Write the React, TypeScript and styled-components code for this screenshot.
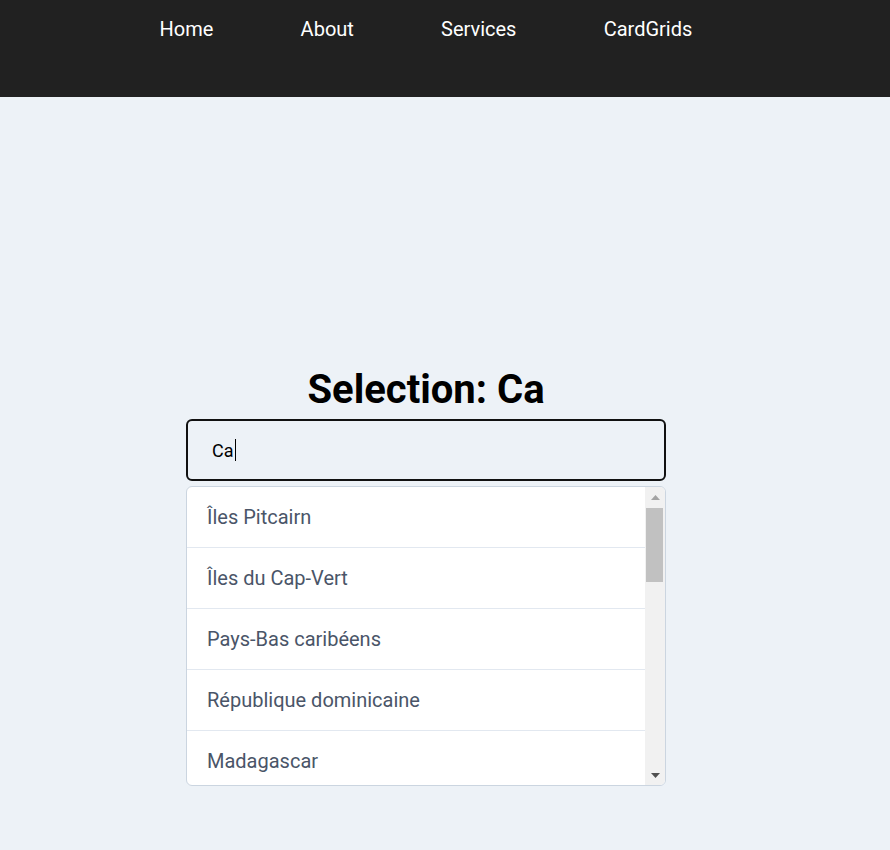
import React, { useState } from "react";
import styled, { createGlobalStyle } from "styled-components";

const Global = createGlobalStyle`
  html, body { margin: 0; padding: 0; }
  body {
    background: #edf2f7;
    font-family: Roboto, "Noto Sans", "Liberation Sans", sans-serif;
  }
  * { box-sizing: border-box; }
`;

const NavBar = styled.nav`
  background: #212121;
  height: 97px;
`;

const NavList = styled.ul`
  list-style: none;
  margin: 0;
  padding: 17px 0 0 116px;
  display: flex;
`;

const NavItem = styled.li`
  padding: 0 43.6px;
`;

const NavLink = styled.a`
  color: #ffffff;
  text-decoration: none;
  font-size: 20px;
  line-height: 24px;
`;

const Main = styled.main`
  display: flex;
  flex-direction: column;
  align-items: center;
  padding: 269px 38px 64px 0;
`;

const Title = styled.h1`
  margin: 0 0 5px;
  font-size: 40px;
  line-height: 48px;
  font-weight: 700;
  color: #000;
`;

const Field = styled.div`
  position: relative;
  width: 480px;
  height: 62px;
`;

const Input = styled.input`
  width: 100%;
  height: 100%;
  border: 2px solid #111;
  border-radius: 6px;
  background: transparent;
  padding: 0 24px;
  font-family: inherit;
  font-size: 18px;
  color: #000;
  outline: none;
  caret-color: transparent;
`;

const Caret = styled.span`
  position: absolute;
  left: 49px;
  top: 20px;
  width: 1px;
  height: 22px;
  background: #000;
  pointer-events: none;
`;

const ListBox = styled.div`
  margin-top: 5px;
  width: 480px;
  height: 300px;
  display: flex;
  background: #fff;
  border: 1px solid #cbd5e0;
  border-radius: 6px;
  overflow: hidden;
`;

const Items = styled.ul`
  list-style: none;
  margin: 0;
  padding: 0;
  flex: 1;
  overflow: hidden;
`;

const Item = styled.li`
  height: 61px;
  padding: 0 20px;
  display: flex;
  align-items: center;
  font-size: 20px;
  color: #4a5568;
  border-bottom: 1px solid #e2e8f0;
`;

const ScrollBar = styled.div`
  width: 20px;
  background: #f1f1f1;
  display: flex;
  flex-direction: column;
`;

const ArrowButton = styled.div`
  height: 20px;
  display: flex;
  align-items: center;
  justify-content: center;
`;

const Track = styled.div`
  flex: 1;
  padding: 1px 2px 0 1px;
`;

const Thumb = styled.div`
  height: 74px;
  background: #c1c1c1;
`;

const countries = [
  "Îles Pitcairn",
  "Îles du Cap-Vert",
  "Pays-Bas caribéens",
  "République dominicaine",
  "Madagascar",
];

export default function App() {
  const [q, setQ] = useState("Ca");
  return (
    <>
      <Global />
      <NavBar>
        <NavList>
          <NavItem><NavLink href="#">Home</NavLink></NavItem>
          <NavItem><NavLink href="#">About</NavLink></NavItem>
          <NavItem><NavLink href="#">Services</NavLink></NavItem>
          <NavItem><NavLink href="#">CardGrids</NavLink></NavItem>
        </NavList>
      </NavBar>
      <Main>
        <Title>Selection: {q}</Title>
        <Field>
          <Input value={q} onChange={(e) => setQ(e.target.value)} />
          <Caret />
        </Field>
        <ListBox>
          <Items>
            {countries.map((c) => (
              <Item key={c}>{c}</Item>
            ))}
          </Items>
          <ScrollBar>
            <ArrowButton>
              <svg width="9" height="5" viewBox="0 0 9 5">
                <polygon points="0,5 9,5 4.5,0" fill="#a3a3a3" />
              </svg>
            </ArrowButton>
            <Track>
              <Thumb />
            </Track>
            <ArrowButton>
              <svg width="9" height="5" viewBox="0 0 9 5">
                <polygon points="0,0 9,0 4.5,5" fill="#505050" />
              </svg>
            </ArrowButton>
          </ScrollBar>
        </ListBox>
      </Main>
    </>
  );
}
